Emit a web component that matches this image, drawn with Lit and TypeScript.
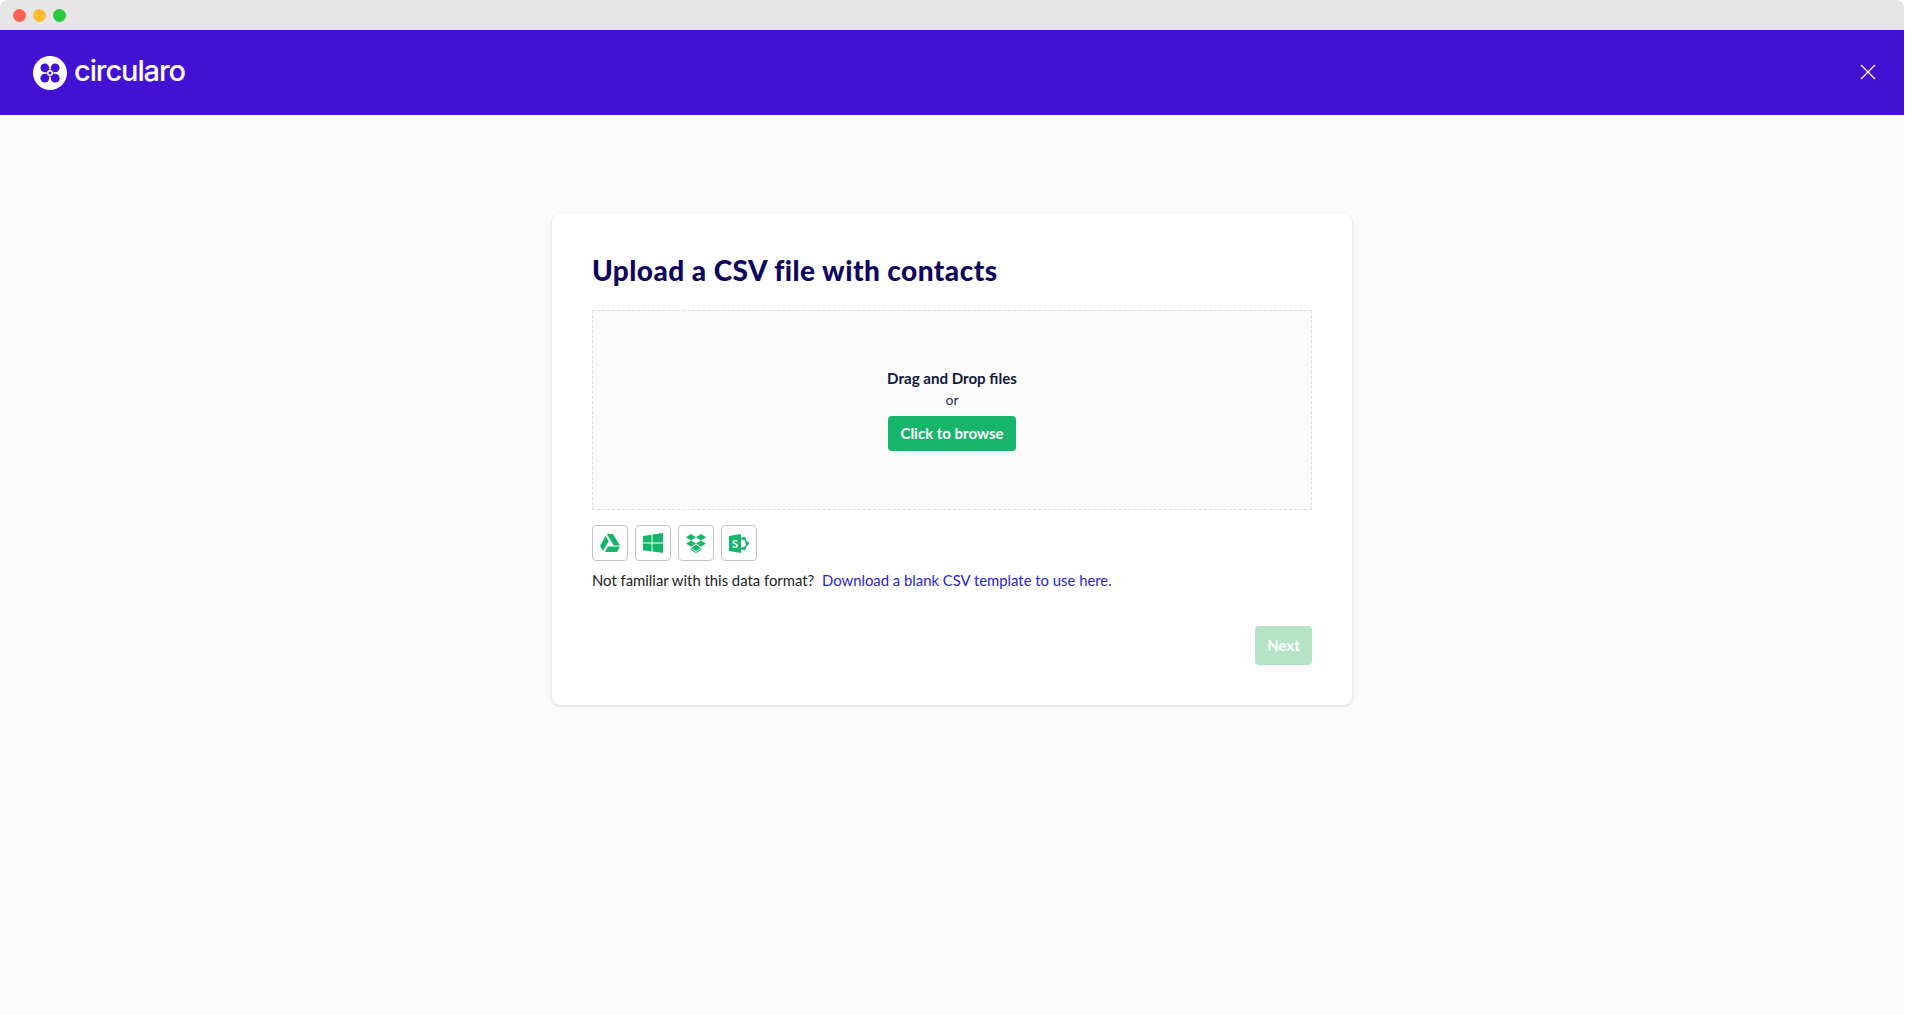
import { LitElement, html, css } from "lit";
import { customElement } from "lit/decorators.js";

@customElement("app-root")
export class AppRoot extends LitElement {
  static styles = css`
    :host { display: block; height: 1015px; overflow: hidden; background: #fff; font-family: "Lato", "Open Sans", sans-serif; }
    .win { height: 1015px; width: 1904px; display: flex; flex-direction: column; background: #fafafa; border-radius: 8px 8px 0 0; overflow: hidden; }
    .chrome { height: 30px; flex: none; background: #e6e6e6; display: flex; align-items: center; gap: 7px; padding: 0 0 0 13px; }
    .dot { width: 13px; height: 13px; border-radius: 50%; }
    .head { height: 85px; flex: none; background: #4311d3; display: flex; align-items: center; justify-content: space-between; padding: 0 28px 2px 33px; box-sizing: border-box; color: #fff; }
    .logo { display: flex; align-items: center; gap: 7px; font-family: "Inter", sans-serif; font-size: 29px; font-weight: 500; letter-spacing: -1.1px; line-height: 34px; }
    .logo span { position: relative; top: -1px; }
    .logo svg { position: relative; top: 1px; }
    .x { display: block; }
    .main { flex: 1; padding-top: 99px; display: flex; justify-content: center; align-items: flex-start; }
    .card { width: 800px; height: 491px; box-sizing: border-box; background: #fff; border-radius: 8px; box-shadow: 0 1px 3px rgba(0,0,0,.16); padding: 39px 40px 0 40px; display: flex; flex-direction: column; }
    h1 { margin: 0; font-family: "Lato", sans-serif; font-size: 28px; line-height: 34px; font-weight: 900; color: #0e0560; letter-spacing: .45px; }
    .drop { margin-top: 23px; height: 200px; box-sizing: border-box; border: 1px dashed #dedede; background: #fafafa; display: flex; flex-direction: column; align-items: center; padding-top: 57px; color: #111a3a; }
    .t1 { font-size: 15.1px; line-height: 20px; font-weight: 700; }
    .t2 { font-size: 14px; line-height: 20px; margin-top: 2px; color: #1c2a4a; }
    .btn { border: 0; border-radius: 4px; background: #15b66a; color: #fff; font: 700 15px "Lato", sans-serif; padding: 0 0 2px; }
    .browse { width: 128px; height: 35px; margin-top: 6px; }
    .icons { display: flex; gap: 7px; margin-top: 15px; }
    .ic { width: 36px; height: 36px; box-sizing: border-box; border: 1px solid #c4c4c4; border-radius: 4px; display: flex; align-items: center; justify-content: center; }
    .note { margin: 9px 0 0; font-size: 14.85px; line-height: 20px; color: #222; }
    a { color: #2a24d8; text-decoration: none; margin-left: 4px; }
    .end { display: flex; justify-content: flex-end; margin-top: 36px; }
    .next { width: 57px; height: 39px; background: #b4e3c5; }
  `;

  render() {
    const g = "#15b66a";
    return html`<div class="win">
      <div class="chrome">
        <span class="dot" style="background:#ff5f57"></span>
        <span class="dot" style="background:#febc2e"></span>
        <span class="dot" style="background:#28c840"></span>
      </div>
      <header class="head">
        <div class="logo">
          <svg width="34" height="34" viewBox="0 0 34 34">
            <circle cx="17" cy="17" r="17" fill="#fff"/>
            <g fill="#4311d3">
              <circle cx="11.8" cy="11.8" r="4.4"/><circle cx="22.2" cy="11.8" r="4.4"/>
              <circle cx="11.8" cy="22.2" r="4.4"/><circle cx="22.2" cy="22.2" r="4.4"/>
            </g>
            <path d="M12 12l10 10M22 12L12 22" stroke="#4311d3" stroke-width="4.4"/>
            <circle cx="17" cy="17" r="3" fill="#fff"/>
            <circle cx="17" cy="17" r="1.5" fill="#4311d3"/>
          </svg>
          <span>circularo</span>
        </div>
        <svg class="x" width="16" height="16" viewBox="0 0 16 16"><path d="M1 1l14 14M15 1L1 15" stroke="#fff" stroke-width="1.2"/></svg>
      </header>
      <main class="main">
        <section class="card">
          <h1>Upload a CSV file with contacts</h1>
          <div class="drop">
            <div class="t1">Drag and Drop files</div>
            <div class="t2">or</div>
            <button class="btn browse">Click to browse</button>
          </div>
          <div class="icons">
            <span class="ic"><svg width="20" height="18" viewBox="0 0 20 18"><path fill="${g}" d="M6.7 0h6.2L20 11.6h-6.2zM5.6 1.8l3.1 5.1L3 17 0 12zM8 12.4h12L17 18H5z"/></svg></span>
            <span class="ic"><svg width="20" height="20" viewBox="0 0 20 20"><path fill="${g}" d="M0 2.9l8.6-1.2v7.9H0zM9.5 1.6L20 0v9.6H9.5zM0 10.5h8.6v7.9L0 17.2zM9.5 10.5H20V20L9.5 18.5z"/></svg></span>
            <span class="ic"><svg width="20" height="19" viewBox="0 0 20 19"><path fill="${g}" d="M5 0l5 3.2L5 6.4 0 3.2zM15 0l5 3.2-5 3.2-5-3.2zM0 9.6l5-3.2 5 3.2-5 3.2zM15 6.4l5 3.2-5 3.2-5-3.2zM5 13.9l5-3.2 5 3.2-5 3.2z"/><path fill="${g}" d="M4.6 14.6l5.4 3.3 5.4-3.3v1.4L10 19l-5.4-3z"/></svg></span>
            <span class="ic"><svg width="20" height="19" viewBox="0 0 20 19">
              <path fill="${g}" d="M0 2L12 0v19L0 17z"/>
              <path fill="none" stroke="${g}" stroke-width="1.4" d="M12 4.5h3l4 5-4 5h-3"/>
              <circle cx="15" cy="4.5" r="1.8" fill="${g}"/><circle cx="18.2" cy="9.5" r="1.8" fill="${g}"/><circle cx="15" cy="14.5" r="1.8" fill="${g}"/>
              <text x="3" y="13.5" font-family="Lato, sans-serif" font-size="11" font-weight="700" fill="#fff">S</text>
            </svg></span>
          </div>
          <p class="note">Not familiar with this data format? <a>Download a blank CSV template to use here</a>.</p>
          <div class="end"><button class="btn next">Next</button></div>
        </section>
      </main>
    </div>`;
  }
}
